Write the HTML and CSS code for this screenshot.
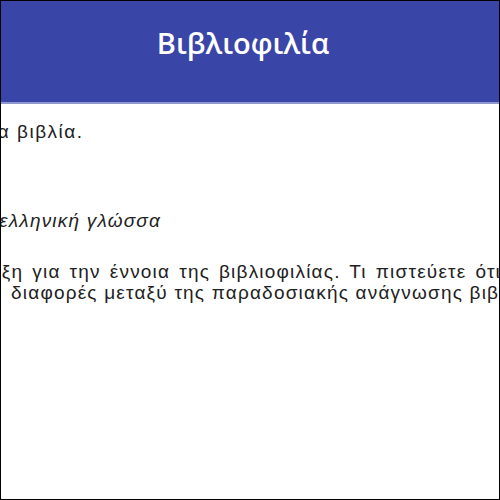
FILE: index.html
```html
<!DOCTYPE html>
<html lang="el">
<head>
<meta charset="utf-8">
<title>Βιβλιοφιλία</title>
<link rel="stylesheet" href="styles.css">
</head>
<body>
<div class="frame">
  <header class="topbar">
    <h1 class="title">Βιβλιοφιλία</h1>
  </header>
  <main class="viewport">
    <p class="intro"><span class="line l1">τα βιβλία.</span></p>
    <h2 class="subtitle"><span class="line l2">η ελληνική γλώσσα</span></h2>
    <p class="body">
      <span class="line l3">Διάλεξη για την έννοια της βιβλιοφιλίας. Τι πιστεύετε ότι είναι</span>
      <span class="line l4">διαφορές μεταξύ της παραδοσιακής ανάγνωσης βιβλίων</span>
    </p>
  </main>
</div>
</body>
</html>
```
FILE: styles.css
```css
html, body {
  margin: 0;
  padding: 0;
  background: #ffffff;
}
.frame {
  box-sizing: border-box;
  width: 500px;
  height: 500px;
  border: 1px solid #000;
  overflow: hidden;
  display: flex;
  flex-direction: column;
}
.topbar {
  flex: 0 0 auto;
  height: 101px;
  background: #3a45a8;
  border-bottom: 2px solid #8f97cf;
  display: flex;
  align-items: center;
  justify-content: center;
}
.title {
  margin: 0 0 18px 0;
  padding-right: 14px;
  font-family: "Open Sans", "Noto Sans", sans-serif;
  font-weight: 600;
  font-size: 29px;
  color: #ffffff;
}
.viewport {
  flex: 1 1 auto;
  overflow: hidden;
  white-space: nowrap;
  color: #222;
  font-family: "Liberation Sans", Arial, sans-serif;
  font-size: 19px;
  letter-spacing: 1.2px;
}
.line {
  display: block;
}
.intro {
  margin: 16px 0 0 0;
  letter-spacing: 1.5px;
  line-height: 24px;
}
.l1 { margin-left: -12px; }
.subtitle {
  margin: 66px 0 0 0;
  font-style: italic;
  font-weight: 400;
  font-size: 19px;
  line-height: 22px;
}
.l2 { margin-left: -20px; }
.body {
  margin: 29px 0 0 0;
  line-height: 21px;
}
.l3 {
  margin-left: -51px;
  word-spacing: 2.5px;
}
.l4 { margin-left: 10px; }
```
